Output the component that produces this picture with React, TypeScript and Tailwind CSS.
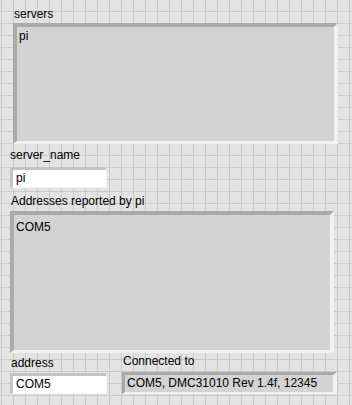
import React from "react";

type BoxProps = {
  children?: React.ReactNode;
  className?: string;
};

// sunken listbox frame, like a LabVIEW classic control
function SunkenBox({ children, className }: BoxProps) {
  return (
    <div
      className={
        "border-t-4 border-l-4 border-r-4 border-b-[3px] border-t-[#ababab] border-l-[#ababab] border-r-[#f1f1f1] border-b-[#f1f1f1] bg-[#d3d3d3] " +
        (className ?? "")
      }
    >
      {children}
    </div>
  );
}

function Label({ text, className }: { text: string; className?: string }) {
  return <div className={"text-[12px] leading-[14px] text-black " + (className ?? "")}>{text}</div>;
}

export default function App() {
  return (
    <div
      className="w-[352px] h-[405px] overflow-hidden bg-[#e3e3e3] bg-[linear-gradient(to_right,#cacaca_1px,transparent_1px),linear-gradient(to_bottom,#cacaca_1px,transparent_1px)] bg-[size:12px_12px] bg-[position:1px_11px] pt-[7px] flex flex-col"
      style={{ fontFamily: '"Liberation Sans", Arial, sans-serif' }}
    >
      <Label text="servers" className="ml-[14px]" />
      <SunkenBox className="ml-[13px] mt-[2px] w-[325px] h-[121px]">
        <div className="pl-[2px] pt-[2px] text-[12px] leading-[14px]">pi</div>
      </SunkenBox>

      <Label text="server_name" className="ml-[10px] mt-[4px]" />
      <div className="ml-[10px] mt-[5px] w-[97px] h-[21px] border-t-[3px] border-l-[3px] border-r border-b border-t-[#c4c4c4] border-l-[#c4c4c4] border-r-[#f4f4f4] border-b-[#f4f4f4] bg-white">
        <div className="pl-[3px] pt-[1px] text-[12px] leading-[14px]">pi</div>
      </div>

      <Label text="Addresses reported by pi" className="ml-[11px] mt-[6px]" />
      <SunkenBox className="ml-[10px] mt-[3px] w-[324px] h-[142px]">
        <div className="pl-[2px] pt-[5px] text-[12px] leading-[14px]">COM5</div>
      </SunkenBox>

      <div className="flex mt-[1px]">
        <div className="ml-[10px] flex flex-col">
          <Label text="address" className="ml-[1px] mt-[2px]" />
          <div className="mt-[3px] w-[97px] h-[21px] border-t-[3px] border-l-[3px] border-r border-b border-t-[#c4c4c4] border-l-[#c4c4c4] border-r-[#f4f4f4] border-b-[#f4f4f4] bg-white">
            <div className="pl-[3px] pt-[1px] text-[12px] leading-[14px]">COM5</div>
          </div>
        </div>
        <div className="ml-[15px] flex flex-col">
          <Label text="Connected to" className="ml-[1px]" />
          <div className="mt-[4px] w-[215px] h-[22px] border-t-[3px] border-l-[3px] border-r-4 border-b-2 border-t-[#a9a9a9] border-l-[#a9a9a9] border-r-[#f1f1f1] border-b-[#f1f1f1] bg-[#d3d3d3]">
            <div className="pl-[2px] pt-[1px] text-[12px] leading-[14px]">COM5, DMC31010 Rev 1.4f, 12345</div>
          </div>
        </div>
      </div>
    </div>
  );
}
